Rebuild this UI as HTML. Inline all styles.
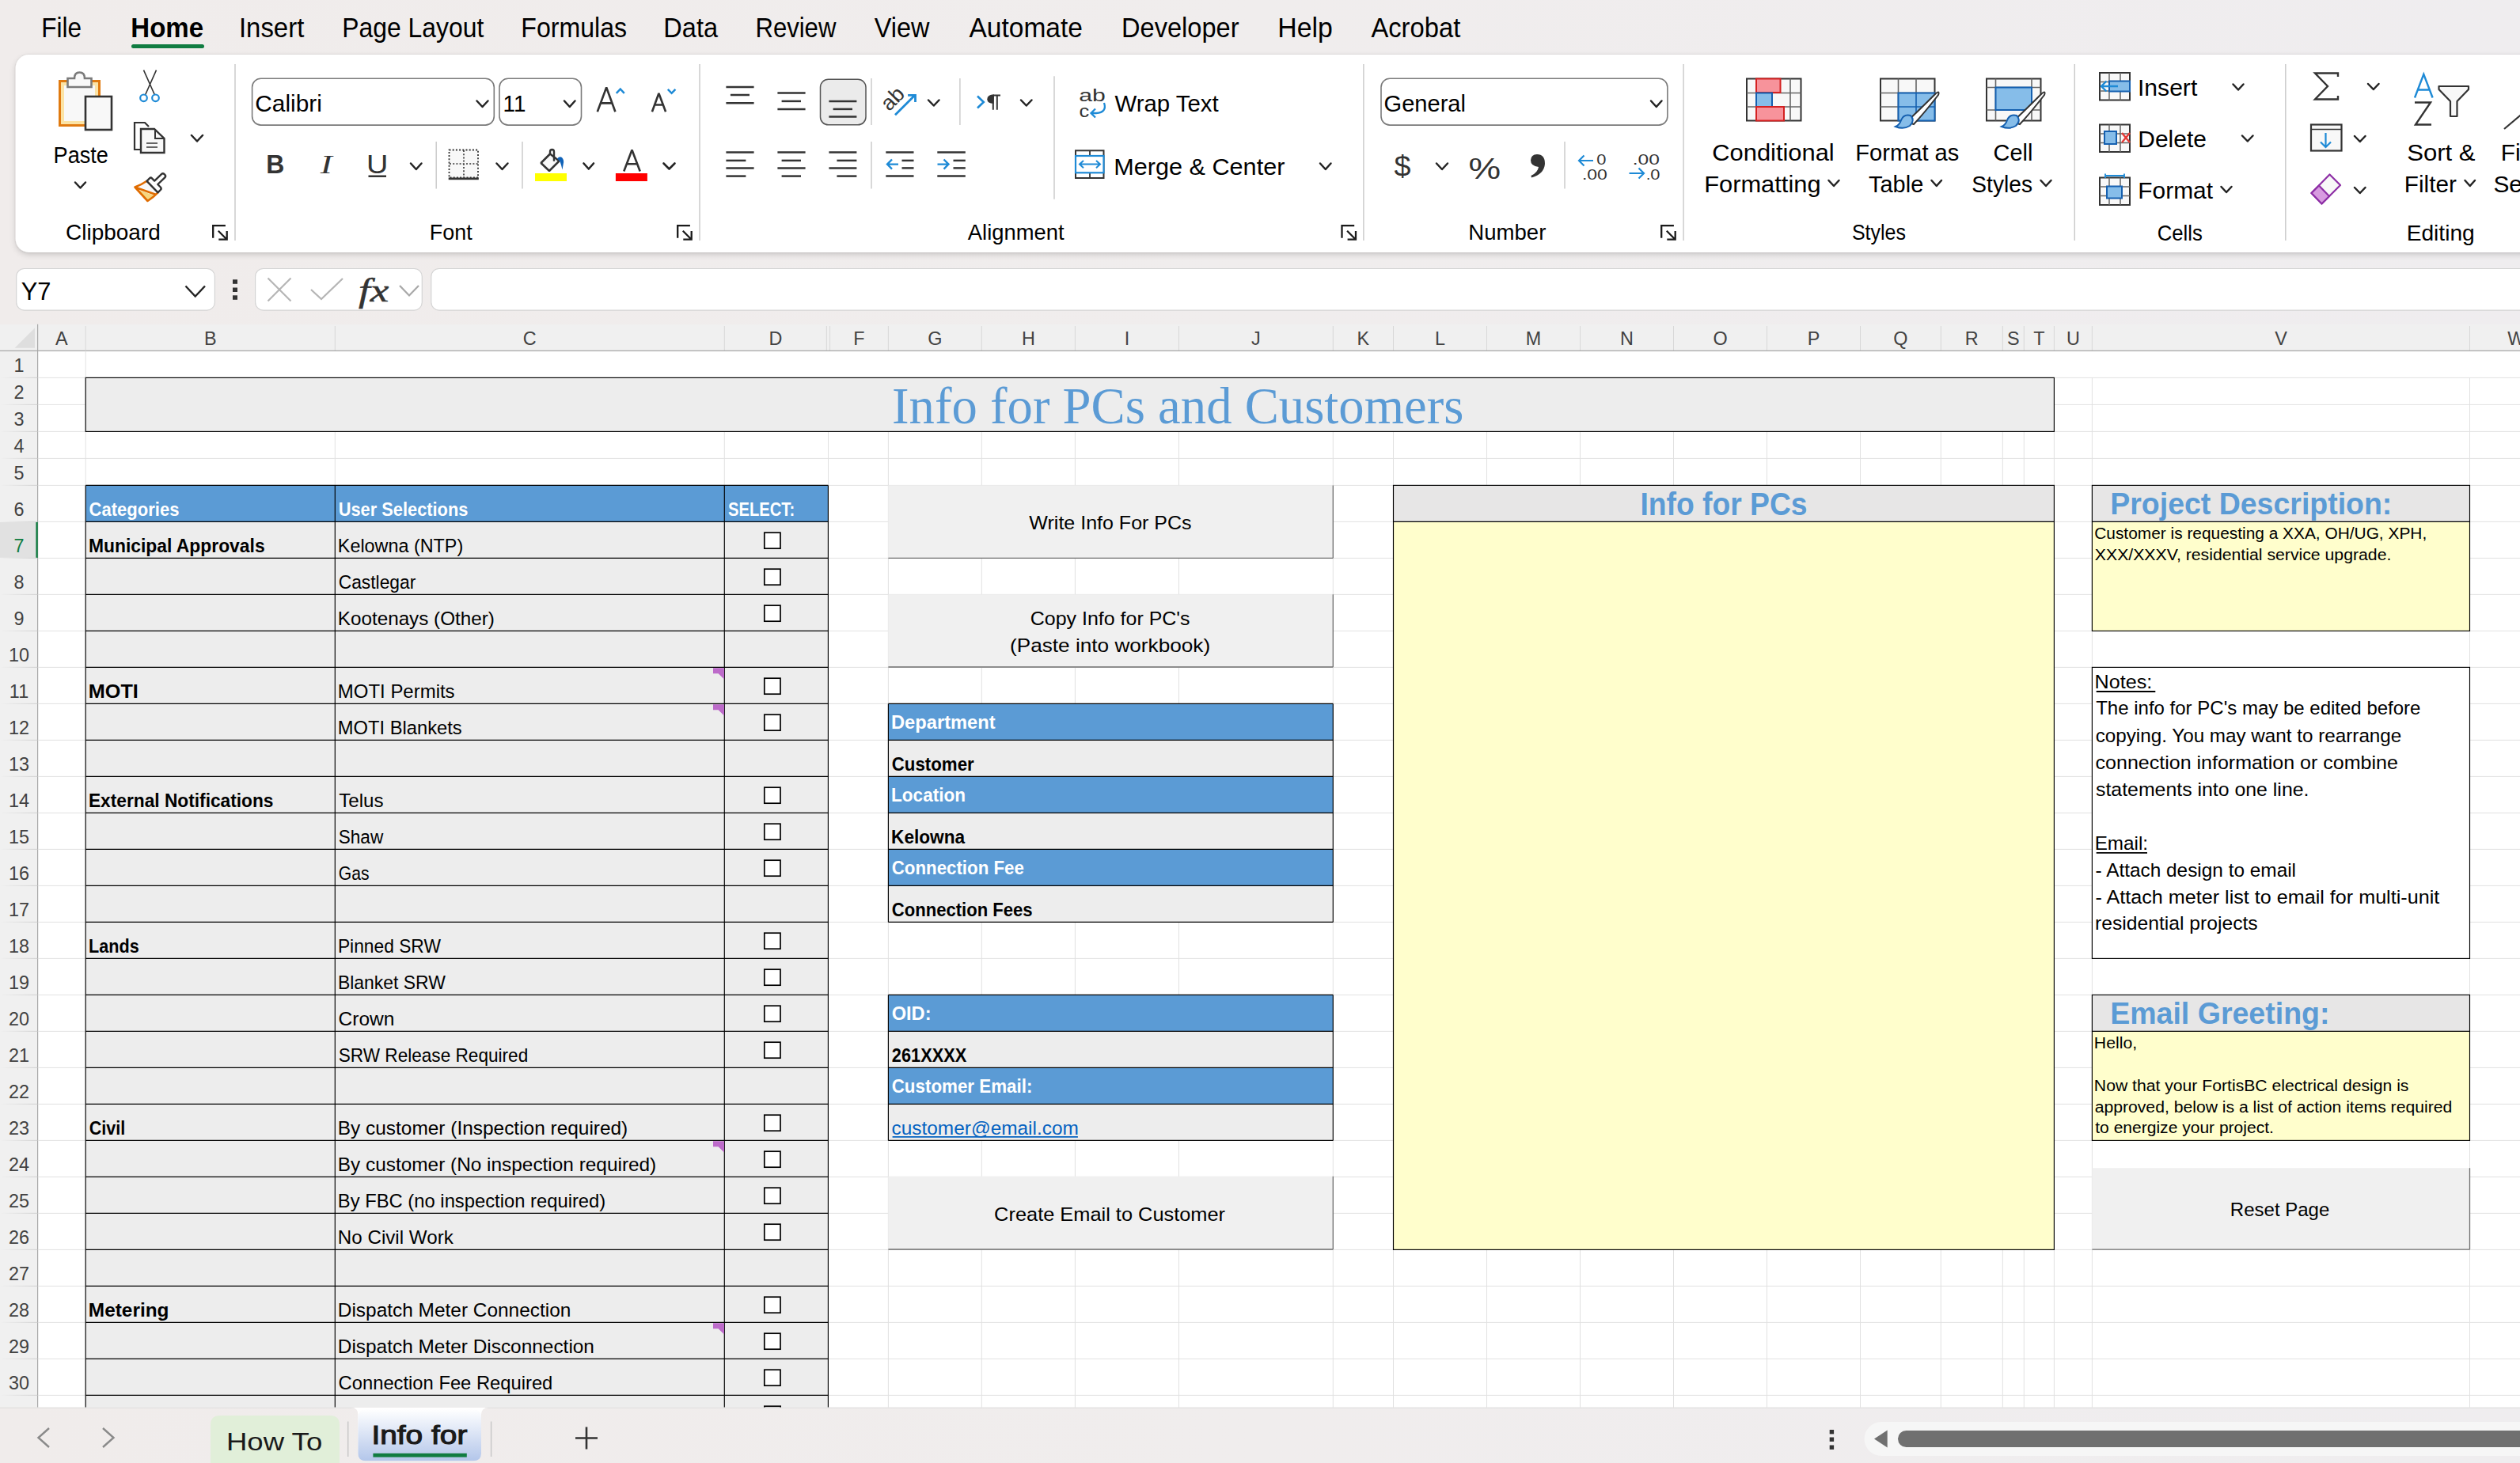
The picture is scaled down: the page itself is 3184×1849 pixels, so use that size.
<!DOCTYPE html><html><head><meta charset="utf-8"><style>html,body{margin:0;padding:0;background:#f0eeec;overflow:hidden}svg{display:block}</style></head><body>
<svg width="3184" height="1849" viewBox="0 0 3184 1849" font-family='"Liberation Sans", sans-serif'>
<defs><linearGradient id="shad" x1="0" y1="0" x2="0" y2="1"><stop offset="0" stop-color="#000" stop-opacity="0.13"/><stop offset="1" stop-color="#000" stop-opacity="0"/></linearGradient><linearGradient id="appbg" x1="0" y1="0" x2="1" y2="0"><stop offset="0" stop-color="#f0eceb"/><stop offset="0.5" stop-color="#f0eded"/><stop offset="1" stop-color="#efedef"/></linearGradient><linearGradient id="tabg" x1="0" y1="0" x2="0" y2="1"><stop offset="0" stop-color="#ffffff"/><stop offset="1" stop-color="#b3c6ea"/></linearGradient><linearGradient id="rowsep" x1="0" y1="0" x2="1" y2="0"><stop offset="0" stop-color="#f0f0f0"/><stop offset="1" stop-color="#d4d4d4"/></linearGradient><filter id="rsh" x="-5%" y="-20%" width="110%" height="150%"><feDropShadow dx="0" dy="0" stdDeviation="1" flood-color="#000" flood-opacity="0.14"/><feDropShadow dx="0" dy="3" stdDeviation="3.5" flood-color="#000" flood-opacity="0.16"/></filter></defs>
<rect x="0.00" y="0.00" width="3184.00" height="1849.00" fill="url(#appbg)" />
<text x="52.20" y="46.50" font-size="34.5" textLength="50.78" lengthAdjust="spacingAndGlyphs" >File</text>
<text x="165.27" y="46.50" font-size="34.5" textLength="91.84" lengthAdjust="spacingAndGlyphs" font-weight="bold" >Home</text>
<text x="301.96" y="46.50" font-size="34.5" textLength="82.33" lengthAdjust="spacingAndGlyphs" >Insert</text>
<text x="432.37" y="46.50" font-size="34.5" textLength="178.90" lengthAdjust="spacingAndGlyphs" >Page Layout</text>
<text x="658.35" y="46.50" font-size="34.5" textLength="133.77" lengthAdjust="spacingAndGlyphs" >Formulas</text>
<text x="838.32" y="46.50" font-size="34.5" textLength="68.68" lengthAdjust="spacingAndGlyphs" >Data</text>
<text x="954.43" y="46.50" font-size="34.5" textLength="101.95" lengthAdjust="spacingAndGlyphs" >Review</text>
<text x="1104.84" y="46.50" font-size="34.5" textLength="69.66" lengthAdjust="spacingAndGlyphs" >View</text>
<text x="1224.52" y="46.50" font-size="34.5" textLength="143.42" lengthAdjust="spacingAndGlyphs" >Automate</text>
<text x="1417.11" y="46.50" font-size="34.5" textLength="148.40" lengthAdjust="spacingAndGlyphs" >Developer</text>
<text x="1614.21" y="46.50" font-size="34.5" textLength="69.60" lengthAdjust="spacingAndGlyphs" >Help</text>
<text x="1732.42" y="46.50" font-size="34.5" textLength="112.87" lengthAdjust="spacingAndGlyphs" >Acrobat</text>
<rect x="166" y="56" width="92" height="5" rx="2.5" fill="#107c41"/>
<rect x="19.7" y="68.9" width="3300" height="250" rx="17" fill="#ffffff" filter="url(#rsh)"/>
<line x1="297.00" y1="81.00" x2="297.00" y2="304.00" stroke="#c8c8c8" stroke-width="1.4" />
<line x1="884.00" y1="81.00" x2="884.00" y2="304.00" stroke="#c8c8c8" stroke-width="1.4" />
<line x1="1722.90" y1="81.00" x2="1722.90" y2="304.00" stroke="#c8c8c8" stroke-width="1.4" />
<line x1="2127.10" y1="81.00" x2="2127.10" y2="304.00" stroke="#c8c8c8" stroke-width="1.4" />
<line x1="2621.30" y1="81.00" x2="2621.30" y2="304.00" stroke="#c8c8c8" stroke-width="1.4" />
<line x1="2887.80" y1="81.00" x2="2887.80" y2="304.00" stroke="#c8c8c8" stroke-width="1.4" />
<text x="83.10" y="303.00" font-size="27.8" textLength="119.66" lengthAdjust="spacingAndGlyphs" >Clipboard</text>
<text x="542.78" y="303.00" font-size="27.8" textLength="53.85" lengthAdjust="spacingAndGlyphs" >Font</text>
<text x="1222.83" y="303.00" font-size="27.8" textLength="121.66" lengthAdjust="spacingAndGlyphs" >Alignment</text>
<text x="1855.33" y="303.00" font-size="27.8" textLength="98.03" lengthAdjust="spacingAndGlyphs" >Number</text>
<text x="2339.88" y="303.30" font-size="27.8" textLength="68.02" lengthAdjust="spacingAndGlyphs" >Styles</text>
<text x="2725.71" y="303.80" font-size="27.8" textLength="57.19" lengthAdjust="spacingAndGlyphs" >Cells</text>
<text x="3040.68" y="303.80" font-size="27.8" textLength="86.09" lengthAdjust="spacingAndGlyphs" >Editing</text>
<path d="M269.2 300.7 L269.2 285.2 L284.9 285.2" fill="none" stroke="#1a1a1a" stroke-width="2.3" />
<path d="M275.8 291.8 L286.2 302.2 M286.7 292.0 L286.7 302.7 L276.3 302.7" fill="none" stroke="#1a1a1a" stroke-width="2.3" />
<path d="M856.2 300.7 L856.2 285.2 L871.9 285.2" fill="none" stroke="#1a1a1a" stroke-width="2.3" />
<path d="M862.8 291.8 L873.2 302.2 M873.7 292.0 L873.7 302.7 L863.3 302.7" fill="none" stroke="#1a1a1a" stroke-width="2.3" />
<path d="M1695.5 300.7 L1695.5 285.2 L1711.2 285.2" fill="none" stroke="#1a1a1a" stroke-width="2.3" />
<path d="M1702.1 291.8 L1712.5 302.2 M1713.0 292.0 L1713.0 302.7 L1702.6 302.7" fill="none" stroke="#1a1a1a" stroke-width="2.3" />
<path d="M2099.2 300.7 L2099.2 285.2 L2114.9 285.2" fill="none" stroke="#1a1a1a" stroke-width="2.3" />
<path d="M2105.8 291.8 L2116.2 302.2 M2116.7 292.0 L2116.7 302.7 L2106.3 302.7" fill="none" stroke="#1a1a1a" stroke-width="2.3" />
<rect x="75.5" y="102.5" width="50" height="56" fill="#fbe3a5" stroke="#e07a10" stroke-width="3"/>
<rect x="81" y="108" width="39" height="45" fill="#f8f8f8"/>
<path d="M85.5 110 L85.5 99 L94 99 Q94 91.5 100.5 91.5 Q107 91.5 107 99 L115.5 99 L115.5 110 Z" fill="#f8f8f8" stroke="#7a7a7a" stroke-width="2.6"/>
<rect x="108" y="122" width="33" height="42" fill="#f8f8f8" stroke="#333" stroke-width="2.6"/>
<text x="67.56" y="205.60" font-size="29.9" textLength="69.35" lengthAdjust="spacingAndGlyphs" >Paste</text>
<path d="M95.0 230.5 L101.5 237.5 L108.0 230.5" fill="none" stroke="#242424" stroke-width="2.5" stroke-linecap="round" stroke-linejoin="round"/>
<path d="M181.5 88.6 L195.5 120 M197.5 88.6 L183.5 120" fill="none" stroke="#333333" stroke-width="1.6" />
<circle cx="181.5" cy="123.8" r="4.3" fill="none" stroke="#1e8ad6" stroke-width="2.2"/>
<circle cx="196.5" cy="123.8" r="4.3" fill="none" stroke="#1e8ad6" stroke-width="2.2"/>
<path d="M187 189 L170 189 L170 155 L183 155 L188 160" fill="none" stroke="#333333" stroke-width="2.2" />
<path d="M178 193 L178 163 L195 163 L207.5 175 L207.5 193 Z" fill="#f8f8f8" stroke="#333333" stroke-width="2.4" />
<path d="M196 163 L196 175 L207.5 175" fill="none" stroke="#333333" stroke-width="2" />
<path d="M185 181 L199 181 M185 186 L199 186" fill="none" stroke="#666" stroke-width="1.8" />
<path d="M242.0 171.0 L249.0 178.5 L256.0 171.0" fill="none" stroke="#242424" stroke-width="2.5" stroke-linecap="round" stroke-linejoin="round"/>
<path d="M185.5 228.8 Q178 234 170.5 236.5 L196 245.5 L199.5 243.3 Z" fill="#f8f8f8"/>
<path d="M175 240 L195 247 L187 253 Z" fill="#f6d67e"/>
<path d="M185.5 228.8 Q178 234 170.5 236.5 L186.5 254 Q194 249 199.5 243.3 M172.5 237.2 L196.5 245.8" fill="none" stroke="#e06c00" stroke-width="2.6" stroke-linejoin="round"/>
<path d="M185.5 228.8 L189 225.3 Q190.5 223.8 192 225.3 L195.2 228.6 L204 220.1 Q205.8 218.4 207.6 220.1 L208.3 220.8 Q210 222.6 208.3 224.3 L199.3 233 L202.8 236.5 Q204.5 238.3 202.8 240 L199.5 243.3 Z" fill="#fff" stroke="#333" stroke-width="2.4" stroke-linejoin="round"/>
<rect x="318.6" y="99.3" width="305.7" height="58.8" rx="11" fill="#fff" stroke="#7a7a7a" stroke-width="1.6"/>
<text x="322.31" y="141.00" font-size="29.9" textLength="84.48" lengthAdjust="spacingAndGlyphs" >Calibri</text>
<path d="M602.5 127.5 L609.5 135.0 L616.5 127.5" fill="none" stroke="#242424" stroke-width="2.5" stroke-linecap="round" stroke-linejoin="round"/>
<rect x="631" y="99.3" width="103.5" height="58.8" rx="11" fill="#fff" stroke="#7a7a7a" stroke-width="1.6"/>
<text x="635.52" y="141.00" font-size="29.9" textLength="28.82" lengthAdjust="spacingAndGlyphs" >11</text>
<path d="M713.0 127.5 L719.8 135.0 L726.5 127.5" fill="none" stroke="#242424" stroke-width="2.5" stroke-linecap="round" stroke-linejoin="round"/>
<path d="M754.8 141.3 L766.2 110.5 L777.4 141.3 M759 130.4 L773.5 130.4" fill="none" stroke="#333" stroke-width="2.6" stroke-linejoin="bevel"/>
<path d="M778.8 117.8 L783.8 112.5 L788.8 117.8" fill="none" stroke="#1e8ad6" stroke-width="2.5" />
<path d="M823.9 141.3 L832.4 118 L841.1 141.3 M827.5 132.5 L837.5 132.5" fill="none" stroke="#333" stroke-width="2.6" stroke-linejoin="bevel"/>
<path d="M843.8 112.8 L848.6 117.8 L853.4 112.8" fill="none" stroke="#1e8ad6" stroke-width="2.5" />
<text x="336.34" y="218.80" font-size="34" textLength="23.09" lengthAdjust="spacingAndGlyphs" font-weight="bold" fill="#333" >B</text>
<text x="404.73" y="218.80" font-size="34" textLength="15.00" lengthAdjust="spacingAndGlyphs" font-style="italic" font-family='"Liberation Serif", serif' fill="#333" >I</text>
<text x="463.06" y="218.80" font-size="34" textLength="27.36" lengthAdjust="spacingAndGlyphs" fill="#333" >U</text>
<rect x="465.50" y="221.50" width="22.50" height="2.50" fill="#333" />
<path d="M519.0 206.5 L525.8 214.0 L532.5 206.5" fill="none" stroke="#242424" stroke-width="2.5" stroke-linecap="round" stroke-linejoin="round"/>
<line x1="551.20" y1="179.00" x2="551.20" y2="238.60" stroke="#c8c8c8" stroke-width="1.4" />
<rect x="567.5" y="189.5" width="36.5" height="35" fill="#f8f8f8" stroke="#333" stroke-width="1.8" stroke-dasharray="2 2.2"/>
<path d="M586 190 L586 224 M568 207 L604 207" fill="none" stroke="#333" stroke-width="1.6" stroke-dasharray="2 2.2"/>
<rect x="566.70" y="224.50" width="38.10" height="2.70" fill="#333" />
<path d="M627.5 206.5 L634.5 214.0 L641.5 206.5" fill="none" stroke="#242424" stroke-width="2.5" stroke-linecap="round" stroke-linejoin="round"/>
<line x1="660.00" y1="179.00" x2="660.00" y2="238.60" stroke="#c8c8c8" stroke-width="1.4" />
<path d="M683.5 206 L695 194.5 L706.5 203.5 L694 216 Z" fill="#f8f8f8" stroke="#333" stroke-width="2.5" stroke-linejoin="bevel"/>
<path d="M695 196 L695 192 Q695 189 697.5 189 Q700 189 700 192 L700 203.8" fill="none" stroke="#333" stroke-width="2.4" />
<path d="M704 200.5 Q707 197 710 199 Q713 202 711.8 207 L710.5 214.5 Q709 208 707.5 204 Z" fill="#0f62b8"/>
<rect x="676.00" y="219.00" width="40.00" height="10.00" fill="#ffff00" />
<path d="M737.5 206.5 L743.8 213.5 L750.0 206.5" fill="none" stroke="#242424" stroke-width="2.6" stroke-linecap="round" stroke-linejoin="round"/>
<path d="M788.3 216.5 L798.5 189.5 L808.7 216.5 M792.2 207.3 L804.8 207.3" fill="none" stroke="#333" stroke-width="2.6" stroke-linejoin="bevel"/>
<rect x="777.90" y="219.00" width="40.00" height="10.00" fill="#ff0000" />
<path d="M838.5 206.5 L845.5 213.5 L852.5 206.5" fill="none" stroke="#242424" stroke-width="2.6" stroke-linecap="round" stroke-linejoin="round"/>
<path d="M917.4 110.0 L952.6 110.0" fill="none" stroke="#333" stroke-width="2.5" />
<path d="M922.9 120.0 L947.0 120.0" fill="none" stroke="#333" stroke-width="2.5" />
<path d="M917.4 130.2 L952.6 130.2" fill="none" stroke="#333" stroke-width="2.5" />
<path d="M982.4 117.6 L1017.6 117.6" fill="none" stroke="#333" stroke-width="2.5" />
<path d="M987.6 127.9 L1012.0 127.9" fill="none" stroke="#333" stroke-width="2.5" />
<path d="M982.4 137.9 L1017.6 137.9" fill="none" stroke="#333" stroke-width="2.5" />
<rect x="1036.5" y="100.3" width="57.5" height="57.5" rx="10" fill="#ebebeb" stroke="#555" stroke-width="1.5"/>
<path d="M1047.4 127.9 L1082.4 127.9" fill="none" stroke="#333" stroke-width="2.5" />
<path d="M1052.6 137.9 L1077.0 137.9" fill="none" stroke="#333" stroke-width="2.5" />
<path d="M1047.4 147.6 L1082.4 147.6" fill="none" stroke="#333" stroke-width="2.5" />
<line x1="1101.00" y1="99.00" x2="1101.00" y2="158.00" stroke="#c8c8c8" stroke-width="1.4" />
<text x="0" y="0" font-size="27" fill="#333" transform="translate(1123.5,141.5) rotate(-45)">ab</text>
<path d="M1131 145.2 L1155.5 120.8 M1147.1 120.3 L1156.5 120.3 L1156.5 128.9" fill="none" stroke="#1e8ad6" stroke-width="2.8" />
<path d="M1173.0 126.5 L1179.8 133.5 L1186.5 126.5" fill="none" stroke="#242424" stroke-width="2.5" stroke-linecap="round" stroke-linejoin="round"/>
<line x1="1212.90" y1="99.00" x2="1212.90" y2="158.00" stroke="#c8c8c8" stroke-width="1.4" />
<path d="M1235 121.5 L1242.8 129 L1235 136.5" fill="none" stroke="#1e8ad6" stroke-width="2.6" />
<path d="M1256 119.5 Q1247.3 119.5 1247.3 125.3 Q1247.3 131 1255.5 131 Z" fill="#333"/>
<path d="M1254.8 120.5 L1254.8 138.7 M1259.8 120.5 L1259.8 138.7 M1254 120.6 L1264 120.6" fill="none" stroke="#333" stroke-width="2" />
<path d="M1290.0 126.5 L1296.8 133.5 L1303.5 126.5" fill="none" stroke="#242424" stroke-width="2.5" stroke-linecap="round" stroke-linejoin="round"/>
<line x1="1332.00" y1="96.20" x2="1332.00" y2="251.70" stroke="#c8c8c8" stroke-width="1.4" />
<path d="M917.4 192.6 L952.6 192.6" fill="none" stroke="#333" stroke-width="2.5" />
<path d="M917.4 202.9 L942.4 202.9" fill="none" stroke="#333" stroke-width="2.5" />
<path d="M917.4 212.4 L952.6 212.4" fill="none" stroke="#333" stroke-width="2.5" />
<path d="M917.4 222.6 L942.4 222.6" fill="none" stroke="#333" stroke-width="2.5" />
<path d="M982.4 192.6 L1017.6 192.6" fill="none" stroke="#333" stroke-width="2.5" />
<path d="M987.6 202.9 L1012.0 202.9" fill="none" stroke="#333" stroke-width="2.5" />
<path d="M982.4 212.4 L1017.6 212.4" fill="none" stroke="#333" stroke-width="2.5" />
<path d="M987.6 222.6 L1012.0 222.6" fill="none" stroke="#333" stroke-width="2.5" />
<path d="M1047.4 192.6 L1082.4 192.6" fill="none" stroke="#333" stroke-width="2.5" />
<path d="M1057.4 202.9 L1082.4 202.9" fill="none" stroke="#333" stroke-width="2.5" />
<path d="M1047.4 212.4 L1082.4 212.4" fill="none" stroke="#333" stroke-width="2.5" />
<path d="M1057.4 222.6 L1082.4 222.6" fill="none" stroke="#333" stroke-width="2.5" />
<line x1="1101.00" y1="179.00" x2="1101.00" y2="238.60" stroke="#c8c8c8" stroke-width="1.4" />
<path d="M1119.3 192.6 L1154.5 192.6" fill="none" stroke="#333" stroke-width="2.5" />
<path d="M1139.5 202.9 L1154.5 202.9" fill="none" stroke="#333" stroke-width="2.5" />
<path d="M1139.5 212.4 L1154.5 212.4" fill="none" stroke="#333" stroke-width="2.5" />
<path d="M1119.3 222.6 L1154.5 222.6" fill="none" stroke="#333" stroke-width="2.5" />
<path d="M1135 207.6 L1121 207.6 M1127 201.5 L1121 207.6 L1127 213.7" fill="none" stroke="#1e8ad6" stroke-width="2.4" />
<path d="M1184.3 192.6 L1219.8 192.6" fill="none" stroke="#333" stroke-width="2.5" />
<path d="M1204.5 202.9 L1219.8 202.9" fill="none" stroke="#333" stroke-width="2.5" />
<path d="M1204.5 212.4 L1219.8 212.4" fill="none" stroke="#333" stroke-width="2.5" />
<path d="M1184.3 222.6 L1219.8 222.6" fill="none" stroke="#333" stroke-width="2.5" />
<path d="M1184.5 207.6 L1198.5 207.6 M1192.5 201.5 L1198.5 207.6 L1192.5 213.7" fill="none" stroke="#1e8ad6" stroke-width="2.4" />
<text x="1363.22" y="128.00" font-size="22" textLength="33.56" lengthAdjust="spacingAndGlyphs" fill="#333" >ab</text>
<text x="1363.42" y="147.50" font-size="22" textLength="12.72" lengthAdjust="spacingAndGlyphs" fill="#333" >c</text>
<path d="M1395 130 Q1399 142 1385 143 L1379 143 M1384 137.5 L1378.5 143 L1384 148.5" fill="none" stroke="#1e8ad6" stroke-width="2.3" />
<text x="1408.45" y="141.00" font-size="29.9" textLength="131.27" lengthAdjust="spacingAndGlyphs" >Wrap Text</text>
<rect x="1359" y="190.3" width="35.5" height="34.7" fill="#fff" stroke="#333" stroke-width="2"/>
<path d="M1377 190.5 L1377 197 M1377 218.5 L1377 225" fill="none" stroke="#333" stroke-width="1.8" />
<rect x="1359" y="197" width="35.5" height="21.3" fill="#fff" stroke="#1e8ad6" stroke-width="2.2"/>
<path d="M1364 207.6 L1390 207.6 M1369 203 L1364 207.6 L1369 212.2 M1385 203 L1390 207.6 L1385 212.2" fill="none" stroke="#1e8ad6" stroke-width="2" />
<text x="1407.27" y="221.00" font-size="29.9" textLength="216.12" lengthAdjust="spacingAndGlyphs" >Merge &amp; Center</text>
<path d="M1668.0 206.5 L1674.8 214.0 L1681.5 206.5" fill="none" stroke="#242424" stroke-width="2.5" stroke-linecap="round" stroke-linejoin="round"/>
<rect x="1745" y="99.3" width="361.9" height="58.8" rx="11" fill="#fff" stroke="#7a7a7a" stroke-width="1.6"/>
<text x="1748.55" y="141.00" font-size="29.9" textLength="103.42" lengthAdjust="spacingAndGlyphs" >General</text>
<path d="M2086.0 127.5 L2092.8 135.0 L2099.5 127.5" fill="none" stroke="#242424" stroke-width="2.5" stroke-linecap="round" stroke-linejoin="round"/>
<text x="1761.62" y="222.50" font-size="36" textLength="20.99" lengthAdjust="spacingAndGlyphs" fill="#333" >$</text>
<path d="M1815.0 206.5 L1822.0 214.0 L1829.0 206.5" fill="none" stroke="#242424" stroke-width="2.5" stroke-linecap="round" stroke-linejoin="round"/>
<text x="1855.40" y="225.50" font-size="37" textLength="40.66" lengthAdjust="spacingAndGlyphs" fill="#333" >%</text>
<path d="M1942 195 Q1952 195 1952 207 Q1951 220 1935 224.5 L1934.5 222 Q1943 218 1944 211 Q1934 210 1934 202.5 Q1934.5 195 1942 195 Z" fill="#333"/>
<line x1="1977.00" y1="179.00" x2="1977.00" y2="238.60" stroke="#c8c8c8" stroke-width="1.4" />
<text x="2017.18" y="207.50" font-size="19" textLength="12.17" lengthAdjust="spacingAndGlyphs" fill="#333" >0</text>
<text x="1998.93" y="227.00" font-size="19" textLength="31.93" lengthAdjust="spacingAndGlyphs" fill="#333" >.00</text>
<path d="M2013 203 L1995 203 M2001.5 196.5 L1995 203 L2001.5 209.5" fill="none" stroke="#1e8ad6" stroke-width="2.2" />
<text x="2062.79" y="207.50" font-size="19" textLength="34.14" lengthAdjust="spacingAndGlyphs" fill="#333" >.00</text>
<text x="2085.18" y="227.00" font-size="19" textLength="12.17" lengthAdjust="spacingAndGlyphs" fill="#333" >0</text>
<text x="2080.00" y="227.00" font-size="19" fill="#333" >.</text>
<path d="M2058.5 219 L2077 219 M2070.5 212.5 L2077 219 L2070.5 225.5" fill="none" stroke="#1e8ad6" stroke-width="2.2" />
<rect x="2207" y="99.5" width="68.5" height="53" fill="#f8f8f8" stroke="#333" stroke-width="2"/>
<path d="M2207 117.5 L2275.5 117.5 M2207 135 L2275.5 135 M2262 99.5 L2262 152.5" fill="none" stroke="#666" stroke-width="1.6" />
<rect x="2219" y="99.5" width="30.5" height="17.5" fill="#f7939b" stroke="#d42121" stroke-width="2"/>
<rect x="2219" y="117.5" width="20" height="17.5" fill="#86bde9" stroke="#1560b0" stroke-width="2"/>
<rect x="2219" y="135" width="35" height="17.5" fill="#f7939b" stroke="#d42121" stroke-width="2"/>
<text x="2163.26" y="202.90" font-size="29.9" textLength="154.49" lengthAdjust="spacingAndGlyphs" >Conditional</text>
<text x="2153.16" y="242.90" font-size="29.9" textLength="147.43" lengthAdjust="spacingAndGlyphs" >Formatting</text>
<path d="M2310.5 228.0 L2317.0 235.0 L2323.5 228.0" fill="none" stroke="#242424" stroke-width="2.5" stroke-linecap="round" stroke-linejoin="round"/>
<rect x="2376" y="99.5" width="68.5" height="53" fill="#f8f8f8" stroke="#333" stroke-width="2"/>
<path d="M2376 117.5 L2444.5 117.5 M2376 135 L2444.5 135 M2398.5 99.5 L2398.5 152.5 M2421 99.5 L2421 152.5" fill="none" stroke="#666" stroke-width="1.6" />
<rect x="2398.5" y="117.5" width="46" height="35" fill="#86bde9" stroke="#1560b0" stroke-width="2"/>
<path d="M2398.5 135 L2444.5 135 M2421 117.5 L2421 152.5" fill="none" stroke="#1560b0" stroke-width="1.6" />
<path d="M2409 154 Q2424 140 2446 118 Q2451 114 2449 120 Q2432 142 2418 157 Z" fill="#fff" stroke="#333" stroke-width="2"/>
<path d="M2395 160 Q2405 164 2413 159 Q2420 152 2414 146 Q2405 144 2402 152 Q2400 158 2395 160 Z" fill="#86bde9" stroke="#1560b0" stroke-width="2"/>
<text x="2344.30" y="202.90" font-size="29.9" textLength="131.05" lengthAdjust="spacingAndGlyphs" >Format as</text>
<text x="2361.05" y="242.90" font-size="29.9" textLength="69.20" lengthAdjust="spacingAndGlyphs" >Table</text>
<path d="M2440.5 228.0 L2446.8 235.0 L2453.0 228.0" fill="none" stroke="#242424" stroke-width="2.5" stroke-linecap="round" stroke-linejoin="round"/>
<rect x="2510" y="99.5" width="68.5" height="53" fill="#f8f8f8" stroke="#333" stroke-width="2"/>
<path d="M2510 110.5 L2578.5 110.5 M2510 139 L2578.5 139 M2521.5 99.5 L2521.5 152.5 M2567 99.5 L2567 152.5" fill="none" stroke="#666" stroke-width="1.6" />
<rect x="2521.5" y="110.5" width="45.5" height="28.5" fill="#86bde9" stroke="#1560b0" stroke-width="2"/>
<path d="M2543 154 Q2558 140 2580 118 Q2585 114 2583 120 Q2566 142 2552 157 Z" fill="#fff" stroke="#333" stroke-width="2"/>
<path d="M2529 160 Q2539 164 2547 159 Q2554 152 2548 146 Q2539 144 2536 152 Q2534 158 2529 160 Z" fill="#86bde9" stroke="#1560b0" stroke-width="2"/>
<text x="2518.55" y="202.90" font-size="29.9" textLength="49.80" lengthAdjust="spacingAndGlyphs" >Cell</text>
<text x="2491.33" y="242.90" font-size="29.9" textLength="76.67" lengthAdjust="spacingAndGlyphs" >Styles</text>
<path d="M2578.5 228.0 L2585.0 235.0 L2591.5 228.0" fill="none" stroke="#242424" stroke-width="2.5" stroke-linecap="round" stroke-linejoin="round"/>
<rect x="2653" y="92.0" width="38" height="34.5" fill="#f8f8f8" stroke="#333" stroke-width="2"/>
<path d="M2665 92.0 L2665 126.5 M2679 92.0 L2679 126.5 M2653 103.5 L2691 103.5 M2653 115.0 L2691 115.0" fill="none" stroke="#666" stroke-width="1.5" />
<rect x="2665" y="102.5" width="26" height="13" fill="#86bde9" stroke="#1560b0" stroke-width="2"/>
<path d="M2676 109 L2655 109 M2661.5 102.5 L2655 109 L2661.5 115.5" fill="none" stroke="#1e8ad6" stroke-width="2.4" />
<text x="2701.02" y="121.40" font-size="29.9" textLength="75.24" lengthAdjust="spacingAndGlyphs" >Insert</text>
<path d="M2821.5 106.5 L2828.0 113.5 L2834.5 106.5" fill="none" stroke="#242424" stroke-width="2.5" stroke-linecap="round" stroke-linejoin="round"/>
<rect x="2653" y="157.5" width="38" height="34.5" fill="#f8f8f8" stroke="#333" stroke-width="2"/>
<path d="M2665 157.5 L2665 192.0 M2679 157.5 L2679 192.0 M2653 169.0 L2691 169.0 M2653 180.5 L2691 180.5" fill="none" stroke="#666" stroke-width="1.5" />
<rect x="2659" y="166" width="15" height="16" fill="#86bde9" stroke="#1560b0" stroke-width="2"/>
<path d="M2681 168 L2691 180 M2691 168 L2681 180" fill="none" stroke="#e53935" stroke-width="2.4" />
<text x="2701.33" y="186.30" font-size="29.9" textLength="86.57" lengthAdjust="spacingAndGlyphs" >Delete</text>
<path d="M2833.0 171.5 L2839.8 178.5 L2846.5 171.5" fill="none" stroke="#242424" stroke-width="2.5" stroke-linecap="round" stroke-linejoin="round"/>
<rect x="2653" y="224.5" width="38" height="34.5" fill="#f8f8f8" stroke="#333" stroke-width="2"/>
<path d="M2665 224.5 L2665 259.0 M2679 224.5 L2679 259.0 M2653 236.0 L2691 236.0 M2653 247.5 L2691 247.5" fill="none" stroke="#666" stroke-width="1.5" />
<rect x="2662" y="235.5" width="19" height="15" fill="#86bde9" stroke="#1560b0" stroke-width="2"/>
<path d="M2660 219.5 L2660 225 M2684 219.5 L2684 225 M2660 222 L2684 222" fill="none" stroke="#1e8ad6" stroke-width="1.8" />
<text x="2701.33" y="251.20" font-size="29.9" textLength="94.68" lengthAdjust="spacingAndGlyphs" >Format</text>
<path d="M2806.5 236.0 L2813.0 243.0 L2819.5 236.0" fill="none" stroke="#242424" stroke-width="2.5" stroke-linecap="round" stroke-linejoin="round"/>
<path d="M2954 97 L2954 92.5 L2925 92.5 L2941 109 L2925 125.5 L2954 125.5 L2954 121" fill="none" stroke="#333" stroke-width="2.4" />
<path d="M2992.0 106.0 L2998.8 113.0 L3005.5 106.0" fill="none" stroke="#242424" stroke-width="2.5" stroke-linecap="round" stroke-linejoin="round"/>
<rect x="2920" y="157.5" width="38.5" height="33" fill="#f8f8f8" stroke="#333" stroke-width="2.2"/>
<path d="M2920 163.5 L2958.5 163.5" fill="none" stroke="#333" stroke-width="1.6" />
<path d="M2938.5 168 L2938.5 186 M2932 179.5 L2938.5 186 L2945 179.5" fill="none" stroke="#1e8ad6" stroke-width="2.2" />
<path d="M2975.0 172.0 L2981.8 179.0 L2988.5 172.0" fill="none" stroke="#242424" stroke-width="2.5" stroke-linecap="round" stroke-linejoin="round"/>
<path d="M2920.5 244 L2943.5 220.5 L2957 234 L2933.5 257.5 Z" fill="#f8f8f8" stroke="#8e2fa6" stroke-width="2.2" stroke-linejoin="round"/>
<path d="M2920.5 244 L2930 234.5 L2943 248 L2933.5 257.5 Z" fill="#d79be0" stroke="#8e2fa6" stroke-width="2.2" stroke-linejoin="round"/>
<path d="M2975.0 237.0 L2981.8 244.0 L2988.5 237.0" fill="none" stroke="#242424" stroke-width="2.5" stroke-linecap="round" stroke-linejoin="round"/>
<path d="M3051 123.5 L3062.3 93.8 L3073.6 123.5 M3055 113.5 L3069.6 113.5" fill="none" stroke="#1e8ad6" stroke-width="2.4" />
<path d="M3051 129.5 L3071 129.5 L3052 157.5 L3072 157.5" fill="none" stroke="#333" stroke-width="2.4" />
<path d="M3081.5 109 L3119 109 L3119 113 L3104.5 128 L3104.5 147 L3096 147 L3096 128 L3081.5 113 Z" fill="#f8f8f8" stroke="#333" stroke-width="2.2" stroke-linejoin="round"/>
<text x="3041.20" y="202.50" font-size="29.9" textLength="86.43" lengthAdjust="spacingAndGlyphs" >Sort &amp;</text>
<text x="3037.85" y="243.10" font-size="29.9" textLength="65.99" lengthAdjust="spacingAndGlyphs" >Filter</text>
<path d="M3114.5 228.0 L3120.8 235.0 L3127.0 228.0" fill="none" stroke="#242424" stroke-width="2.5" stroke-linecap="round" stroke-linejoin="round"/>
<text x="3159.70" y="202.50" font-size="29.9" >Fi</text>
<text x="3150.40" y="243.10" font-size="29.9" >Sel</text>
<path d="M3164 163 L3190 141" fill="none" stroke="#333" stroke-width="2.2" />
<rect x="20.7" y="339.5" width="250.7" height="52.6" rx="10" fill="#fff" stroke="#d4d4d4" stroke-width="1.2"/>
<text x="26.70" y="379.00" font-size="32" textLength="37.78" lengthAdjust="spacingAndGlyphs" >Y7</text>
<path d="M234.5 361.5 L246.7 374.5 L259 361.5" fill="none" stroke="#242424" stroke-width="2.4" />
<rect x="294.00" y="353.30" width="6.00" height="5.50" fill="#333" />
<rect x="294.00" y="363.50" width="6.00" height="5.50" fill="#333" />
<rect x="294.00" y="373.30" width="6.00" height="5.50" fill="#333" />
<rect x="322.6" y="339.5" width="210.7" height="52.6" rx="10" fill="#fff" stroke="#d4d4d4" stroke-width="1.2"/>
<path d="M338.5 351.5 L367.5 380.5 M367.5 351.5 L338.5 380.5" fill="none" stroke="#b5b5b5" stroke-width="2.2" />
<path d="M393 366 L406 378 L433 352" fill="none" stroke="#b5b5b5" stroke-width="2.2" />
<text x="453.07" y="380.50" font-size="42" textLength="38.29" lengthAdjust="spacingAndGlyphs" font-style="italic" font-family='"Liberation Serif", serif' fill="#333" stroke="#333" stroke-width="0.5">fx</text>
<path d="M505 361 L517 373.5 L529 361" fill="none" stroke="#a8a8a8" stroke-width="2.2" />
<rect x="544.8" y="339.5" width="2700" height="52.6" rx="10" fill="#fff" stroke="#d4d4d4" stroke-width="1.2"/>
<rect x="0.00" y="409.80" width="3184.00" height="33.60" fill="#f0f0f0" />
<rect x="0.00" y="443.40" width="47.60" height="1335.40" fill="#f0f0f0" />
<rect x="47.60" y="443.40" width="3136.40" height="1335.40" fill="#ffffff" />
<path d="M18.6 439.8 L44 439.8 L44 414.5 Z" fill="#dedede" />
<line x1="108.20" y1="412.00" x2="108.20" y2="443.40" stroke="#d8d8d8" stroke-width="1" />
<text x="77.90" y="435.80" font-size="23.4" fill="#424242" text-anchor="middle" >A</text>
<line x1="423.30" y1="412.00" x2="423.30" y2="443.40" stroke="#d8d8d8" stroke-width="1" />
<text x="265.75" y="435.80" font-size="23.4" fill="#424242" text-anchor="middle" >B</text>
<line x1="915.30" y1="412.00" x2="915.30" y2="443.40" stroke="#d8d8d8" stroke-width="1" />
<text x="669.30" y="435.80" font-size="23.4" fill="#424242" text-anchor="middle" >C</text>
<line x1="1044.40" y1="412.00" x2="1044.40" y2="443.40" stroke="#d8d8d8" stroke-width="1" />
<text x="979.85" y="435.80" font-size="23.4" fill="#424242" text-anchor="middle" >D</text>
<line x1="1122.40" y1="412.00" x2="1122.40" y2="443.40" stroke="#d8d8d8" stroke-width="1" />
<text x="1085.50" y="435.80" font-size="23.4" fill="#424242" text-anchor="middle" >F</text>
<line x1="1240.30" y1="412.00" x2="1240.30" y2="443.40" stroke="#d8d8d8" stroke-width="1" />
<text x="1181.35" y="435.80" font-size="23.4" fill="#424242" text-anchor="middle" >G</text>
<line x1="1358.40" y1="412.00" x2="1358.40" y2="443.40" stroke="#d8d8d8" stroke-width="1" />
<text x="1299.35" y="435.80" font-size="23.4" fill="#424242" text-anchor="middle" >H</text>
<line x1="1489.50" y1="412.00" x2="1489.50" y2="443.40" stroke="#d8d8d8" stroke-width="1" />
<text x="1423.95" y="435.80" font-size="23.4" fill="#424242" text-anchor="middle" >I</text>
<line x1="1684.30" y1="412.00" x2="1684.30" y2="443.40" stroke="#d8d8d8" stroke-width="1" />
<text x="1586.90" y="435.80" font-size="23.4" fill="#424242" text-anchor="middle" >J</text>
<line x1="1760.50" y1="412.00" x2="1760.50" y2="443.40" stroke="#d8d8d8" stroke-width="1" />
<text x="1722.40" y="435.80" font-size="23.4" fill="#424242" text-anchor="middle" >K</text>
<line x1="1878.50" y1="412.00" x2="1878.50" y2="443.40" stroke="#d8d8d8" stroke-width="1" />
<text x="1819.50" y="435.80" font-size="23.4" fill="#424242" text-anchor="middle" >L</text>
<line x1="1996.50" y1="412.00" x2="1996.50" y2="443.40" stroke="#d8d8d8" stroke-width="1" />
<text x="1937.50" y="435.80" font-size="23.4" fill="#424242" text-anchor="middle" >M</text>
<line x1="2114.50" y1="412.00" x2="2114.50" y2="443.40" stroke="#d8d8d8" stroke-width="1" />
<text x="2055.50" y="435.80" font-size="23.4" fill="#424242" text-anchor="middle" >N</text>
<line x1="2232.50" y1="412.00" x2="2232.50" y2="443.40" stroke="#d8d8d8" stroke-width="1" />
<text x="2173.50" y="435.80" font-size="23.4" fill="#424242" text-anchor="middle" >O</text>
<line x1="2350.50" y1="412.00" x2="2350.50" y2="443.40" stroke="#d8d8d8" stroke-width="1" />
<text x="2291.50" y="435.80" font-size="23.4" fill="#424242" text-anchor="middle" >P</text>
<line x1="2452.30" y1="412.00" x2="2452.30" y2="443.40" stroke="#d8d8d8" stroke-width="1" />
<text x="2401.40" y="435.80" font-size="23.4" fill="#424242" text-anchor="middle" >Q</text>
<line x1="2530.30" y1="412.00" x2="2530.30" y2="443.40" stroke="#d8d8d8" stroke-width="1" />
<text x="2491.30" y="435.80" font-size="23.4" fill="#424242" text-anchor="middle" >R</text>
<line x1="2557.30" y1="412.00" x2="2557.30" y2="443.40" stroke="#d8d8d8" stroke-width="1" />
<text x="2543.80" y="435.80" font-size="23.4" fill="#424242" text-anchor="middle" >S</text>
<line x1="2595.40" y1="412.00" x2="2595.40" y2="443.40" stroke="#d8d8d8" stroke-width="1" />
<text x="2576.35" y="435.80" font-size="23.4" fill="#424242" text-anchor="middle" >T</text>
<line x1="2643.40" y1="412.00" x2="2643.40" y2="443.40" stroke="#d8d8d8" stroke-width="1" />
<text x="2619.40" y="435.80" font-size="23.4" fill="#424242" text-anchor="middle" >U</text>
<line x1="3120.50" y1="412.00" x2="3120.50" y2="443.40" stroke="#d8d8d8" stroke-width="1" />
<text x="2881.95" y="435.80" font-size="23.4" fill="#424242" text-anchor="middle" >V</text>
<line x1="3300.00" y1="412.00" x2="3300.00" y2="443.40" stroke="#d8d8d8" stroke-width="1" />
<text x="3168.20" y="435.80" font-size="23.4" fill="#424242" >W</text>
<line x1="1048.60" y1="412.00" x2="1048.60" y2="443.40" stroke="#d8d8d8" stroke-width="1" />
<line x1="0.00" y1="443.40" x2="3184.00" y2="443.40" stroke="#a8a8a8" stroke-width="1.3" />
<line x1="47.60" y1="409.80" x2="47.60" y2="1778.80" stroke="#a8a8a8" stroke-width="1.2" />
<rect x="0.00" y="659.40" width="47.20" height="46.00" fill="#e1e1e1" />
<line x1="46.60" y1="659.40" x2="46.60" y2="705.40" stroke="#107c41" stroke-width="2.4" />
<rect x="0" y="476.80" width="47" height="1.2" fill="url(#rowsep)"/>
<text x="24.00" y="469.90" font-size="23.4" fill="#424242" text-anchor="middle" >1</text>
<rect x="0" y="510.80" width="47" height="1.2" fill="url(#rowsep)"/>
<text x="24.00" y="503.90" font-size="23.4" fill="#424242" text-anchor="middle" >2</text>
<rect x="0" y="544.80" width="47" height="1.2" fill="url(#rowsep)"/>
<text x="24.00" y="537.90" font-size="23.4" fill="#424242" text-anchor="middle" >3</text>
<rect x="0" y="578.80" width="47" height="1.2" fill="url(#rowsep)"/>
<text x="24.00" y="571.90" font-size="23.4" fill="#424242" text-anchor="middle" >4</text>
<rect x="0" y="612.80" width="47" height="1.2" fill="url(#rowsep)"/>
<text x="24.00" y="605.90" font-size="23.4" fill="#424242" text-anchor="middle" >5</text>
<rect x="0" y="658.80" width="47" height="1.2" fill="url(#rowsep)"/>
<text x="24.00" y="651.90" font-size="23.4" fill="#424242" text-anchor="middle" >6</text>
<rect x="0" y="704.80" width="47" height="1.2" fill="url(#rowsep)"/>
<text x="24.00" y="697.90" font-size="23.4" fill="#107c41" text-anchor="middle" >7</text>
<rect x="0" y="750.80" width="47" height="1.2" fill="url(#rowsep)"/>
<text x="24.00" y="743.90" font-size="23.4" fill="#424242" text-anchor="middle" >8</text>
<rect x="0" y="796.80" width="47" height="1.2" fill="url(#rowsep)"/>
<text x="24.00" y="789.90" font-size="23.4" fill="#424242" text-anchor="middle" >9</text>
<rect x="0" y="842.80" width="47" height="1.2" fill="url(#rowsep)"/>
<text x="24.00" y="835.90" font-size="23.4" fill="#424242" text-anchor="middle" >10</text>
<rect x="0" y="888.80" width="47" height="1.2" fill="url(#rowsep)"/>
<text x="24.00" y="881.90" font-size="23.4" fill="#424242" text-anchor="middle" >11</text>
<rect x="0" y="934.80" width="47" height="1.2" fill="url(#rowsep)"/>
<text x="24.00" y="927.90" font-size="23.4" fill="#424242" text-anchor="middle" >12</text>
<rect x="0" y="980.80" width="47" height="1.2" fill="url(#rowsep)"/>
<text x="24.00" y="973.90" font-size="23.4" fill="#424242" text-anchor="middle" >13</text>
<rect x="0" y="1026.80" width="47" height="1.2" fill="url(#rowsep)"/>
<text x="24.00" y="1019.90" font-size="23.4" fill="#424242" text-anchor="middle" >14</text>
<rect x="0" y="1072.80" width="47" height="1.2" fill="url(#rowsep)"/>
<text x="24.00" y="1065.90" font-size="23.4" fill="#424242" text-anchor="middle" >15</text>
<rect x="0" y="1118.80" width="47" height="1.2" fill="url(#rowsep)"/>
<text x="24.00" y="1111.90" font-size="23.4" fill="#424242" text-anchor="middle" >16</text>
<rect x="0" y="1164.80" width="47" height="1.2" fill="url(#rowsep)"/>
<text x="24.00" y="1157.90" font-size="23.4" fill="#424242" text-anchor="middle" >17</text>
<rect x="0" y="1210.80" width="47" height="1.2" fill="url(#rowsep)"/>
<text x="24.00" y="1203.90" font-size="23.4" fill="#424242" text-anchor="middle" >18</text>
<rect x="0" y="1256.80" width="47" height="1.2" fill="url(#rowsep)"/>
<text x="24.00" y="1249.90" font-size="23.4" fill="#424242" text-anchor="middle" >19</text>
<rect x="0" y="1302.80" width="47" height="1.2" fill="url(#rowsep)"/>
<text x="24.00" y="1295.90" font-size="23.4" fill="#424242" text-anchor="middle" >20</text>
<rect x="0" y="1348.80" width="47" height="1.2" fill="url(#rowsep)"/>
<text x="24.00" y="1341.90" font-size="23.4" fill="#424242" text-anchor="middle" >21</text>
<rect x="0" y="1394.80" width="47" height="1.2" fill="url(#rowsep)"/>
<text x="24.00" y="1387.90" font-size="23.4" fill="#424242" text-anchor="middle" >22</text>
<rect x="0" y="1440.80" width="47" height="1.2" fill="url(#rowsep)"/>
<text x="24.00" y="1433.90" font-size="23.4" fill="#424242" text-anchor="middle" >23</text>
<rect x="0" y="1486.80" width="47" height="1.2" fill="url(#rowsep)"/>
<text x="24.00" y="1479.90" font-size="23.4" fill="#424242" text-anchor="middle" >24</text>
<rect x="0" y="1532.80" width="47" height="1.2" fill="url(#rowsep)"/>
<text x="24.00" y="1525.90" font-size="23.4" fill="#424242" text-anchor="middle" >25</text>
<rect x="0" y="1578.80" width="47" height="1.2" fill="url(#rowsep)"/>
<text x="24.00" y="1571.90" font-size="23.4" fill="#424242" text-anchor="middle" >26</text>
<rect x="0" y="1624.80" width="47" height="1.2" fill="url(#rowsep)"/>
<text x="24.00" y="1617.90" font-size="23.4" fill="#424242" text-anchor="middle" >27</text>
<rect x="0" y="1670.80" width="47" height="1.2" fill="url(#rowsep)"/>
<text x="24.00" y="1663.90" font-size="23.4" fill="#424242" text-anchor="middle" >28</text>
<rect x="0" y="1716.80" width="47" height="1.2" fill="url(#rowsep)"/>
<text x="24.00" y="1709.90" font-size="23.4" fill="#424242" text-anchor="middle" >29</text>
<rect x="0" y="1762.80" width="47" height="1.2" fill="url(#rowsep)"/>
<text x="24.00" y="1755.90" font-size="23.4" fill="#424242" text-anchor="middle" >30</text>
<line x1="108.20" y1="443.40" x2="108.20" y2="1778.80" stroke="#e1e1e1" stroke-width="1" />
<line x1="423.30" y1="477.40" x2="423.30" y2="1778.80" stroke="#e1e1e1" stroke-width="1" />
<line x1="915.30" y1="477.40" x2="915.30" y2="1778.80" stroke="#e1e1e1" stroke-width="1" />
<line x1="1046.50" y1="477.40" x2="1046.50" y2="1778.80" stroke="#e1e1e1" stroke-width="1" />
<line x1="1122.40" y1="477.40" x2="1122.40" y2="1778.80" stroke="#e1e1e1" stroke-width="1" />
<line x1="1240.30" y1="477.40" x2="1240.30" y2="1778.80" stroke="#e1e1e1" stroke-width="1" />
<line x1="1358.40" y1="477.40" x2="1358.40" y2="1778.80" stroke="#e1e1e1" stroke-width="1" />
<line x1="1489.50" y1="477.40" x2="1489.50" y2="1778.80" stroke="#e1e1e1" stroke-width="1" />
<line x1="1684.30" y1="477.40" x2="1684.30" y2="1778.80" stroke="#e1e1e1" stroke-width="1" />
<line x1="1760.50" y1="477.40" x2="1760.50" y2="1778.80" stroke="#e1e1e1" stroke-width="1" />
<line x1="1878.50" y1="477.40" x2="1878.50" y2="1778.80" stroke="#e1e1e1" stroke-width="1" />
<line x1="1996.50" y1="477.40" x2="1996.50" y2="1778.80" stroke="#e1e1e1" stroke-width="1" />
<line x1="2114.50" y1="477.40" x2="2114.50" y2="1778.80" stroke="#e1e1e1" stroke-width="1" />
<line x1="2232.50" y1="477.40" x2="2232.50" y2="1778.80" stroke="#e1e1e1" stroke-width="1" />
<line x1="2350.50" y1="477.40" x2="2350.50" y2="1778.80" stroke="#e1e1e1" stroke-width="1" />
<line x1="2452.30" y1="477.40" x2="2452.30" y2="1778.80" stroke="#e1e1e1" stroke-width="1" />
<line x1="2530.30" y1="477.40" x2="2530.30" y2="1778.80" stroke="#e1e1e1" stroke-width="1" />
<line x1="2557.30" y1="477.40" x2="2557.30" y2="1778.80" stroke="#e1e1e1" stroke-width="1" />
<line x1="2595.40" y1="477.40" x2="2595.40" y2="1778.80" stroke="#e1e1e1" stroke-width="1" />
<line x1="2643.40" y1="477.40" x2="2643.40" y2="1778.80" stroke="#e1e1e1" stroke-width="1" />
<line x1="3120.50" y1="477.40" x2="3120.50" y2="1778.80" stroke="#e1e1e1" stroke-width="1" />
<line x1="47.60" y1="477.40" x2="3184.00" y2="477.40" stroke="#e1e1e1" stroke-width="1" />
<line x1="47.60" y1="511.40" x2="3184.00" y2="511.40" stroke="#e1e1e1" stroke-width="1" />
<line x1="47.60" y1="545.40" x2="3184.00" y2="545.40" stroke="#e1e1e1" stroke-width="1" />
<line x1="47.60" y1="579.40" x2="3184.00" y2="579.40" stroke="#e1e1e1" stroke-width="1" />
<line x1="47.60" y1="613.40" x2="3184.00" y2="613.40" stroke="#e1e1e1" stroke-width="1" />
<line x1="47.60" y1="659.40" x2="3184.00" y2="659.40" stroke="#e1e1e1" stroke-width="1" />
<line x1="47.60" y1="705.40" x2="3184.00" y2="705.40" stroke="#e1e1e1" stroke-width="1" />
<line x1="47.60" y1="751.40" x2="3184.00" y2="751.40" stroke="#e1e1e1" stroke-width="1" />
<line x1="47.60" y1="797.40" x2="3184.00" y2="797.40" stroke="#e1e1e1" stroke-width="1" />
<line x1="47.60" y1="843.40" x2="3184.00" y2="843.40" stroke="#e1e1e1" stroke-width="1" />
<line x1="47.60" y1="889.40" x2="3184.00" y2="889.40" stroke="#e1e1e1" stroke-width="1" />
<line x1="47.60" y1="935.40" x2="3184.00" y2="935.40" stroke="#e1e1e1" stroke-width="1" />
<line x1="47.60" y1="981.40" x2="3184.00" y2="981.40" stroke="#e1e1e1" stroke-width="1" />
<line x1="47.60" y1="1027.40" x2="3184.00" y2="1027.40" stroke="#e1e1e1" stroke-width="1" />
<line x1="47.60" y1="1073.40" x2="3184.00" y2="1073.40" stroke="#e1e1e1" stroke-width="1" />
<line x1="47.60" y1="1119.40" x2="3184.00" y2="1119.40" stroke="#e1e1e1" stroke-width="1" />
<line x1="47.60" y1="1165.40" x2="3184.00" y2="1165.40" stroke="#e1e1e1" stroke-width="1" />
<line x1="47.60" y1="1211.40" x2="3184.00" y2="1211.40" stroke="#e1e1e1" stroke-width="1" />
<line x1="47.60" y1="1257.40" x2="3184.00" y2="1257.40" stroke="#e1e1e1" stroke-width="1" />
<line x1="47.60" y1="1303.40" x2="3184.00" y2="1303.40" stroke="#e1e1e1" stroke-width="1" />
<line x1="47.60" y1="1349.40" x2="3184.00" y2="1349.40" stroke="#e1e1e1" stroke-width="1" />
<line x1="47.60" y1="1395.40" x2="3184.00" y2="1395.40" stroke="#e1e1e1" stroke-width="1" />
<line x1="47.60" y1="1441.40" x2="3184.00" y2="1441.40" stroke="#e1e1e1" stroke-width="1" />
<line x1="47.60" y1="1487.40" x2="3184.00" y2="1487.40" stroke="#e1e1e1" stroke-width="1" />
<line x1="47.60" y1="1533.40" x2="3184.00" y2="1533.40" stroke="#e1e1e1" stroke-width="1" />
<line x1="47.60" y1="1579.40" x2="3184.00" y2="1579.40" stroke="#e1e1e1" stroke-width="1" />
<line x1="47.60" y1="1625.40" x2="3184.00" y2="1625.40" stroke="#e1e1e1" stroke-width="1" />
<line x1="47.60" y1="1671.40" x2="3184.00" y2="1671.40" stroke="#e1e1e1" stroke-width="1" />
<line x1="47.60" y1="1717.40" x2="3184.00" y2="1717.40" stroke="#e1e1e1" stroke-width="1" />
<line x1="47.60" y1="1763.40" x2="3184.00" y2="1763.40" stroke="#e1e1e1" stroke-width="1" />
<rect x="108.20" y="477.40" width="2487.20" height="68.00" fill="#ededed" />
<rect x="108.20" y="477.40" width="2487.20" height="68.00" fill="none" stroke="#000" stroke-width="1.15"/>
<text x="1127.04" y="535.20" font-size="64.8" textLength="722.40" lengthAdjust="spacingAndGlyphs" font-family='"Liberation Serif", serif' fill="#5b9bd5" >Info for PCs and Customers</text>
<rect x="108.20" y="613.40" width="938.20" height="46.00" fill="#5b9bd5" />
<rect x="108.20" y="659.40" width="938.20" height="1119.40" fill="#ededed" />
<line x1="108.20" y1="613.40" x2="1046.40" y2="613.40" stroke="#000" stroke-width="1.15" />
<line x1="108.20" y1="659.40" x2="1046.40" y2="659.40" stroke="#000" stroke-width="1.15" />
<line x1="108.20" y1="705.40" x2="1046.40" y2="705.40" stroke="#000" stroke-width="1.15" />
<line x1="108.20" y1="751.40" x2="1046.40" y2="751.40" stroke="#000" stroke-width="1.15" />
<line x1="108.20" y1="797.40" x2="1046.40" y2="797.40" stroke="#000" stroke-width="1.15" />
<line x1="108.20" y1="843.40" x2="1046.40" y2="843.40" stroke="#000" stroke-width="1.15" />
<line x1="108.20" y1="889.40" x2="1046.40" y2="889.40" stroke="#000" stroke-width="1.15" />
<line x1="108.20" y1="935.40" x2="1046.40" y2="935.40" stroke="#000" stroke-width="1.15" />
<line x1="108.20" y1="981.40" x2="1046.40" y2="981.40" stroke="#000" stroke-width="1.15" />
<line x1="108.20" y1="1027.40" x2="1046.40" y2="1027.40" stroke="#000" stroke-width="1.15" />
<line x1="108.20" y1="1073.40" x2="1046.40" y2="1073.40" stroke="#000" stroke-width="1.15" />
<line x1="108.20" y1="1119.40" x2="1046.40" y2="1119.40" stroke="#000" stroke-width="1.15" />
<line x1="108.20" y1="1165.40" x2="1046.40" y2="1165.40" stroke="#000" stroke-width="1.15" />
<line x1="108.20" y1="1211.40" x2="1046.40" y2="1211.40" stroke="#000" stroke-width="1.15" />
<line x1="108.20" y1="1257.40" x2="1046.40" y2="1257.40" stroke="#000" stroke-width="1.15" />
<line x1="108.20" y1="1303.40" x2="1046.40" y2="1303.40" stroke="#000" stroke-width="1.15" />
<line x1="108.20" y1="1349.40" x2="1046.40" y2="1349.40" stroke="#000" stroke-width="1.15" />
<line x1="108.20" y1="1395.40" x2="1046.40" y2="1395.40" stroke="#000" stroke-width="1.15" />
<line x1="108.20" y1="1441.40" x2="1046.40" y2="1441.40" stroke="#000" stroke-width="1.15" />
<line x1="108.20" y1="1487.40" x2="1046.40" y2="1487.40" stroke="#000" stroke-width="1.15" />
<line x1="108.20" y1="1533.40" x2="1046.40" y2="1533.40" stroke="#000" stroke-width="1.15" />
<line x1="108.20" y1="1579.40" x2="1046.40" y2="1579.40" stroke="#000" stroke-width="1.15" />
<line x1="108.20" y1="1625.40" x2="1046.40" y2="1625.40" stroke="#000" stroke-width="1.15" />
<line x1="108.20" y1="1671.40" x2="1046.40" y2="1671.40" stroke="#000" stroke-width="1.15" />
<line x1="108.20" y1="1717.40" x2="1046.40" y2="1717.40" stroke="#000" stroke-width="1.15" />
<line x1="108.20" y1="1763.40" x2="1046.40" y2="1763.40" stroke="#000" stroke-width="1.15" />
<line x1="108.20" y1="613.40" x2="108.20" y2="1778.80" stroke="#000" stroke-width="1.15" />
<line x1="423.30" y1="613.40" x2="423.30" y2="1778.80" stroke="#000" stroke-width="1.15" />
<line x1="915.30" y1="613.40" x2="915.30" y2="1778.80" stroke="#000" stroke-width="1.15" />
<line x1="1046.40" y1="613.40" x2="1046.40" y2="1778.80" stroke="#000" stroke-width="1.15" />
<text x="112.62" y="652.00" font-size="23.7" textLength="113.79" lengthAdjust="spacingAndGlyphs" font-weight="bold" fill="#fff" >Categories</text>
<text x="427.69" y="652.00" font-size="23.7" textLength="163.71" lengthAdjust="spacingAndGlyphs" font-weight="bold" fill="#fff" >User Selections</text>
<text x="920.05" y="652.00" font-size="23.7" textLength="84.06" lengthAdjust="spacingAndGlyphs" font-weight="bold" fill="#fff" >SELECT:</text>
<text x="111.96" y="697.80" font-size="23.7" textLength="222.66" lengthAdjust="spacingAndGlyphs" font-weight="bold" fill="#000" >Municipal Approvals</text>
<text x="111.80" y="881.80" font-size="23.7" textLength="63.03" lengthAdjust="spacingAndGlyphs" font-weight="bold" fill="#000" >MOTI</text>
<text x="111.97" y="1019.80" font-size="23.7" textLength="233.54" lengthAdjust="spacingAndGlyphs" font-weight="bold" fill="#000" >External Notifications</text>
<text x="112.04" y="1203.80" font-size="23.7" textLength="63.62" lengthAdjust="spacingAndGlyphs" font-weight="bold" fill="#000" >Lands</text>
<text x="112.64" y="1433.80" font-size="23.7" textLength="45.56" lengthAdjust="spacingAndGlyphs" font-weight="bold" fill="#000" >Civil</text>
<text x="111.85" y="1663.80" font-size="23.7" textLength="101.62" lengthAdjust="spacingAndGlyphs" font-weight="bold" fill="#000" >Metering</text>
<text x="426.87" y="697.80" font-size="23.7" textLength="158.33" lengthAdjust="spacingAndGlyphs" fill="#000" >Kelowna (NTP)</text>
<text x="427.66" y="743.80" font-size="23.7" textLength="97.68" lengthAdjust="spacingAndGlyphs" fill="#000" >Castlegar</text>
<text x="426.80" y="789.80" font-size="23.7" textLength="198.07" lengthAdjust="spacingAndGlyphs" fill="#000" >Kootenays (Other)</text>
<text x="426.82" y="881.80" font-size="23.7" textLength="147.80" lengthAdjust="spacingAndGlyphs" fill="#000" >MOTI Permits</text>
<text x="426.84" y="927.80" font-size="23.7" textLength="156.80" lengthAdjust="spacingAndGlyphs" fill="#000" >MOTI Blankets</text>
<text x="428.26" y="1019.80" font-size="23.7" textLength="56.38" lengthAdjust="spacingAndGlyphs" fill="#000" >Telus</text>
<text x="427.78" y="1065.80" font-size="23.7" textLength="56.44" lengthAdjust="spacingAndGlyphs" fill="#000" >Shaw</text>
<text x="427.74" y="1111.80" font-size="23.7" textLength="38.78" lengthAdjust="spacingAndGlyphs" fill="#000" >Gas</text>
<text x="426.92" y="1203.80" font-size="23.7" textLength="129.98" lengthAdjust="spacingAndGlyphs" fill="#000" >Pinned SRW</text>
<text x="426.91" y="1249.80" font-size="23.7" textLength="135.97" lengthAdjust="spacingAndGlyphs" fill="#000" >Blanket SRW</text>
<text x="427.57" y="1295.80" font-size="23.7" textLength="70.81" lengthAdjust="spacingAndGlyphs" fill="#000" >Crown</text>
<text x="427.78" y="1341.80" font-size="23.7" textLength="239.44" lengthAdjust="spacingAndGlyphs" fill="#000" >SRW Release Required</text>
<text x="426.79" y="1433.80" font-size="23.7" textLength="366.46" lengthAdjust="spacingAndGlyphs" fill="#000" >By customer (Inspection required)</text>
<text x="426.79" y="1479.80" font-size="23.7" textLength="402.47" lengthAdjust="spacingAndGlyphs" fill="#000" >By customer (No inspection required)</text>
<text x="426.84" y="1525.80" font-size="23.7" textLength="338.42" lengthAdjust="spacingAndGlyphs" fill="#000" >By FBC (no inspection required)</text>
<text x="426.81" y="1571.80" font-size="23.7" textLength="146.00" lengthAdjust="spacingAndGlyphs" fill="#000" >No Civil Work</text>
<text x="426.79" y="1663.80" font-size="23.7" textLength="294.59" lengthAdjust="spacingAndGlyphs" fill="#000" >Dispatch Meter Connection</text>
<text x="426.79" y="1709.80" font-size="23.7" textLength="324.18" lengthAdjust="spacingAndGlyphs" fill="#000" >Dispatch Meter Disconnection</text>
<text x="427.61" y="1755.80" font-size="23.7" textLength="270.71" lengthAdjust="spacingAndGlyphs" fill="#000" >Connection Fee Required</text>
<rect x="965.80" y="673.20" width="20.2" height="20.00" fill="#fff" stroke="#000" stroke-width="1.7"/>
<rect x="965.80" y="719.20" width="20.2" height="20.00" fill="#fff" stroke="#000" stroke-width="1.7"/>
<rect x="965.80" y="765.20" width="20.2" height="20.00" fill="#fff" stroke="#000" stroke-width="1.7"/>
<rect x="965.80" y="857.20" width="20.2" height="20.00" fill="#fff" stroke="#000" stroke-width="1.7"/>
<rect x="965.80" y="903.20" width="20.2" height="20.00" fill="#fff" stroke="#000" stroke-width="1.7"/>
<rect x="965.80" y="995.20" width="20.2" height="20.00" fill="#fff" stroke="#000" stroke-width="1.7"/>
<rect x="965.80" y="1041.20" width="20.2" height="20.00" fill="#fff" stroke="#000" stroke-width="1.7"/>
<rect x="965.80" y="1087.20" width="20.2" height="20.00" fill="#fff" stroke="#000" stroke-width="1.7"/>
<rect x="965.80" y="1179.20" width="20.2" height="20.00" fill="#fff" stroke="#000" stroke-width="1.7"/>
<rect x="965.80" y="1225.20" width="20.2" height="20.00" fill="#fff" stroke="#000" stroke-width="1.7"/>
<rect x="965.80" y="1271.20" width="20.2" height="20.00" fill="#fff" stroke="#000" stroke-width="1.7"/>
<rect x="965.80" y="1317.20" width="20.2" height="20.00" fill="#fff" stroke="#000" stroke-width="1.7"/>
<rect x="965.80" y="1409.20" width="20.2" height="20.00" fill="#fff" stroke="#000" stroke-width="1.7"/>
<rect x="965.80" y="1455.20" width="20.2" height="20.00" fill="#fff" stroke="#000" stroke-width="1.7"/>
<rect x="965.80" y="1501.20" width="20.2" height="20.00" fill="#fff" stroke="#000" stroke-width="1.7"/>
<rect x="965.80" y="1547.20" width="20.2" height="20.00" fill="#fff" stroke="#000" stroke-width="1.7"/>
<rect x="965.80" y="1639.20" width="20.2" height="20.00" fill="#fff" stroke="#000" stroke-width="1.7"/>
<rect x="965.80" y="1685.20" width="20.2" height="20.00" fill="#fff" stroke="#000" stroke-width="1.7"/>
<rect x="965.80" y="1731.20" width="20.2" height="20.00" fill="#fff" stroke="#000" stroke-width="1.7"/>
<rect x="965" y="1776.40" width="22" height="2.40" fill="#000"/><rect x="966.7" y="1778.10" width="18.6" height="0.70" fill="#fff"/>
<path d="M901 844.2 L915 844.2 L915 858.4 L907.6 851.2 L901 851.2 Z" fill="#bd6bca" />
<path d="M901 890.2 L915 890.2 L915 904.4 L907.6 897.2 L901 897.2 Z" fill="#bd6bca" />
<path d="M901 1442.2 L915 1442.2 L915 1456.4 L907.6 1449.2 L901 1449.2 Z" fill="#bd6bca" />
<path d="M901 1672.2 L915 1672.2 L915 1686.4 L907.6 1679.2 L901 1679.2 Z" fill="#bd6bca" />
<rect x="1122.40" y="613.50" width="561.90" height="91.80" fill="#f0f0f0" />
<line x1="1684.30" y1="613.50" x2="1684.30" y2="705.30" stroke="#6e6e6e" stroke-width="1.3" />
<line x1="1122.40" y1="705.30" x2="1684.30" y2="705.30" stroke="#6e6e6e" stroke-width="1.3" />
<text x="1300.37" y="668.90" font-size="23.7" textLength="205.22" lengthAdjust="spacingAndGlyphs" fill="#000" >Write Info For PCs</text>
<rect x="1122.40" y="751.30" width="561.90" height="91.70" fill="#f0f0f0" />
<line x1="1684.30" y1="751.30" x2="1684.30" y2="843.00" stroke="#6e6e6e" stroke-width="1.3" />
<line x1="1122.40" y1="843.00" x2="1684.30" y2="843.00" stroke="#6e6e6e" stroke-width="1.3" />
<text x="1301.75" y="789.90" font-size="23.7" textLength="201.84" lengthAdjust="spacingAndGlyphs" fill="#000" >Copy Info for PC's</text>
<text x="1275.96" y="823.90" font-size="23.7" textLength="253.24" lengthAdjust="spacingAndGlyphs" fill="#000" >(Paste into workbook)</text>
<rect x="1122.40" y="1486.70" width="561.90" height="92.30" fill="#f0f0f0" />
<line x1="1684.30" y1="1486.70" x2="1684.30" y2="1579.00" stroke="#6e6e6e" stroke-width="1.3" />
<line x1="1122.40" y1="1579.00" x2="1684.30" y2="1579.00" stroke="#6e6e6e" stroke-width="1.3" />
<text x="1256.13" y="1543.00" font-size="23.7" textLength="291.93" lengthAdjust="spacingAndGlyphs" fill="#000" >Create Email to Customer</text>
<rect x="1122.40" y="889.40" width="561.90" height="46.00" fill="#5b9bd5" />
<rect x="1122.40" y="935.40" width="561.90" height="46.00" fill="#ededed" />
<text x="1126.00" y="921.40" font-size="23.7" textLength="131.62" lengthAdjust="spacingAndGlyphs" font-weight="bold" fill="#fff" >Department</text>
<text x="1126.71" y="974.00" font-size="23.7" textLength="104.03" lengthAdjust="spacingAndGlyphs" font-weight="bold" fill="#000" >Customer</text>
<rect x="1122.40" y="981.40" width="561.90" height="46.00" fill="#5b9bd5" />
<rect x="1122.40" y="1027.40" width="561.90" height="46.00" fill="#ededed" />
<text x="1126.08" y="1013.40" font-size="23.7" textLength="93.91" lengthAdjust="spacingAndGlyphs" font-weight="bold" fill="#fff" >Location</text>
<text x="1126.07" y="1066.00" font-size="23.7" textLength="93.10" lengthAdjust="spacingAndGlyphs" font-weight="bold" fill="#000" >Kelowna</text>
<rect x="1122.40" y="1073.40" width="561.90" height="46.00" fill="#5b9bd5" />
<rect x="1122.40" y="1119.40" width="561.90" height="46.00" fill="#ededed" />
<text x="1126.71" y="1105.40" font-size="23.7" textLength="167.13" lengthAdjust="spacingAndGlyphs" font-weight="bold" fill="#fff" >Connection Fee</text>
<text x="1126.72" y="1158.00" font-size="23.7" textLength="177.91" lengthAdjust="spacingAndGlyphs" font-weight="bold" fill="#000" >Connection Fees</text>
<line x1="1122.40" y1="889.40" x2="1684.30" y2="889.40" stroke="#000" stroke-width="1.15" />
<line x1="1122.40" y1="935.40" x2="1684.30" y2="935.40" stroke="#000" stroke-width="1.15" />
<line x1="1122.40" y1="981.40" x2="1684.30" y2="981.40" stroke="#000" stroke-width="1.15" />
<line x1="1122.40" y1="1027.40" x2="1684.30" y2="1027.40" stroke="#000" stroke-width="1.15" />
<line x1="1122.40" y1="1073.40" x2="1684.30" y2="1073.40" stroke="#000" stroke-width="1.15" />
<line x1="1122.40" y1="1119.40" x2="1684.30" y2="1119.40" stroke="#000" stroke-width="1.15" />
<line x1="1122.40" y1="1165.40" x2="1684.30" y2="1165.40" stroke="#000" stroke-width="1.15" />
<line x1="1122.40" y1="889.40" x2="1122.40" y2="1165.40" stroke="#000" stroke-width="1.15" />
<line x1="1684.30" y1="889.40" x2="1684.30" y2="1165.40" stroke="#000" stroke-width="1.15" />
<rect x="1122.40" y="1257.40" width="561.90" height="46.00" fill="#5b9bd5" />
<rect x="1122.40" y="1303.40" width="561.90" height="46.00" fill="#ededed" />
<text x="1126.65" y="1289.40" font-size="23.7" textLength="49.91" lengthAdjust="spacingAndGlyphs" font-weight="bold" fill="#fff" >OID:</text>
<text x="1126.84" y="1342.00" font-size="23.7" textLength="94.36" lengthAdjust="spacingAndGlyphs" font-weight="bold" fill="#000" >261XXXX</text>
<rect x="1122.40" y="1349.40" width="561.90" height="46.00" fill="#5b9bd5" />
<rect x="1122.40" y="1395.40" width="561.90" height="46.00" fill="#ededed" />
<text x="1126.71" y="1381.40" font-size="23.7" textLength="177.65" lengthAdjust="spacingAndGlyphs" font-weight="bold" fill="#fff" >Customer Email:</text>
<text x="1126.56" y="1434.00" font-size="23.7" textLength="236.31" lengthAdjust="spacingAndGlyphs" fill="#0563c1" >customer@email.com</text>
<line x1="1127.60" y1="1436.80" x2="1361.90" y2="1436.80" stroke="#0563c1" stroke-width="1.8" />
<line x1="1122.40" y1="1257.40" x2="1684.30" y2="1257.40" stroke="#000" stroke-width="1.15" />
<line x1="1122.40" y1="1303.40" x2="1684.30" y2="1303.40" stroke="#000" stroke-width="1.15" />
<line x1="1122.40" y1="1349.40" x2="1684.30" y2="1349.40" stroke="#000" stroke-width="1.15" />
<line x1="1122.40" y1="1395.40" x2="1684.30" y2="1395.40" stroke="#000" stroke-width="1.15" />
<line x1="1122.40" y1="1441.40" x2="1684.30" y2="1441.40" stroke="#000" stroke-width="1.15" />
<line x1="1122.40" y1="1257.40" x2="1122.40" y2="1441.40" stroke="#000" stroke-width="1.15" />
<line x1="1684.30" y1="1257.40" x2="1684.30" y2="1441.40" stroke="#000" stroke-width="1.15" />
<rect x="1760.50" y="613.40" width="834.90" height="46.00" fill="#e7e6e6" />
<rect x="1760.50" y="659.40" width="834.90" height="920.00" fill="#fffecc" />
<rect x="1760.50" y="613.40" width="834.90" height="966.00" fill="none" stroke="#000" stroke-width="1.15"/>
<line x1="1760.50" y1="659.40" x2="2595.40" y2="659.40" stroke="#000" stroke-width="1.15" />
<text x="2072.49" y="650.70" font-size="40" textLength="211.07" lengthAdjust="spacingAndGlyphs" font-weight="bold" fill="#5b9bd5" >Info for PCs</text>
<rect x="2643.40" y="613.40" width="477.10" height="46.00" fill="#e7e6e6" />
<rect x="2643.40" y="659.40" width="477.10" height="138.00" fill="#fffecc" />
<rect x="2643.40" y="613.40" width="477.10" height="184.00" fill="none" stroke="#000" stroke-width="1.15"/>
<line x1="2643.40" y1="659.40" x2="3120.50" y2="659.40" stroke="#000" stroke-width="1.15" />
<text x="2666.27" y="650.40" font-size="39" textLength="356.08" lengthAdjust="spacingAndGlyphs" font-weight="bold" fill="#5b9bd5" >Project Description:</text>
<text x="2646.26" y="680.60" font-size="19.6" textLength="419.95" lengthAdjust="spacingAndGlyphs" fill="#000" >Customer is requesting a XXA, OH/UG, XPH,</text>
<text x="2646.82" y="707.90" font-size="19.6" textLength="374.59" lengthAdjust="spacingAndGlyphs" fill="#000" >XXX/XXXV, residential service upgrade.</text>
<rect x="2643.40" y="843.40" width="477.10" height="368.00" fill="#ffffff" />
<rect x="2643.40" y="843.40" width="477.10" height="368.00" fill="none" stroke="#000" stroke-width="1.15"/>
<text x="2646.63" y="869.80" font-size="23.7" textLength="72.64" lengthAdjust="spacingAndGlyphs" fill="#000" >Notes:</text>
<line x1="2648.70" y1="874.00" x2="2723.30" y2="874.00" stroke="#000" stroke-width="1.8" />
<text x="2648.16" y="903.40" font-size="23.7" textLength="410.31" lengthAdjust="spacingAndGlyphs" fill="#000" >The info for PC's may be edited before</text>
<text x="2647.67" y="937.60" font-size="23.7" textLength="386.66" lengthAdjust="spacingAndGlyphs" fill="#000" >copying. You may want to rearrange</text>
<text x="2647.64" y="971.70" font-size="23.7" textLength="382.17" lengthAdjust="spacingAndGlyphs" fill="#000" >connection information or combine</text>
<text x="2648.02" y="1005.90" font-size="23.7" textLength="269.43" lengthAdjust="spacingAndGlyphs" fill="#000" >statements into one line.</text>
<text x="2646.70" y="1073.70" font-size="23.7" textLength="67.41" lengthAdjust="spacingAndGlyphs" fill="#000" >Email:</text>
<line x1="2648.70" y1="1077.90" x2="2713.00" y2="1077.90" stroke="#000" stroke-width="1.8" />
<text x="2647.60" y="1107.60" font-size="23.7" textLength="253.44" lengthAdjust="spacingAndGlyphs" fill="#000" >- Attach design to email</text>
<text x="2647.57" y="1141.80" font-size="23.7" textLength="434.65" lengthAdjust="spacingAndGlyphs" fill="#000" >- Attach meter list to email for multi-unit</text>
<text x="2647.10" y="1175.40" font-size="23.7" textLength="205.57" lengthAdjust="spacingAndGlyphs" fill="#000" >residential projects</text>
<rect x="2643.40" y="1257.40" width="477.10" height="46.00" fill="#e7e6e6" />
<rect x="2643.40" y="1303.40" width="477.10" height="138.00" fill="#fffecc" />
<rect x="2643.40" y="1257.40" width="477.10" height="184.00" fill="none" stroke="#000" stroke-width="1.15"/>
<line x1="2643.40" y1="1303.40" x2="3120.50" y2="1303.40" stroke="#000" stroke-width="1.15" />
<text x="2666.17" y="1293.60" font-size="39" textLength="277.33" lengthAdjust="spacingAndGlyphs" font-weight="bold" fill="#5b9bd5" >Email Greeting:</text>
<text x="2645.85" y="1324.90" font-size="19.6" textLength="54.24" lengthAdjust="spacingAndGlyphs" fill="#000" >Hello,</text>
<text x="2645.85" y="1379.00" font-size="19.6" textLength="397.59" lengthAdjust="spacingAndGlyphs" fill="#000" >Now that your FortisBC electrical design is</text>
<text x="2646.70" y="1405.60" font-size="19.6" textLength="451.52" lengthAdjust="spacingAndGlyphs" fill="#000" >approved, below is a list of action items required</text>
<text x="2647.28" y="1432.40" font-size="19.6" textLength="225.63" lengthAdjust="spacingAndGlyphs" fill="#000" >to energize your project.</text>
<rect x="2643.40" y="1476.20" width="477.10" height="102.90" fill="#f0f0f0" />
<line x1="3120.50" y1="1476.20" x2="3120.50" y2="1579.10" stroke="#6e6e6e" stroke-width="1.3" />
<line x1="2643.40" y1="1579.10" x2="3120.50" y2="1579.10" stroke="#6e6e6e" stroke-width="1.3" />
<text x="2817.82" y="1537.00" font-size="23.7" textLength="125.52" lengthAdjust="spacingAndGlyphs" fill="#000" >Reset Page</text>
<rect x="0.00" y="1778.80" width="3184.00" height="70.20" fill="url(#appbg)" />
<line x1="0.00" y1="1779.30" x2="3184.00" y2="1779.30" stroke="#dcdcdc" stroke-width="1" />
<path d="M62 1805 L48.5 1817 L62 1829" fill="none" stroke="#8a8a8a" stroke-width="2.4" />
<path d="M130 1805 L143.5 1817 L130 1829" fill="none" stroke="#8a8a8a" stroke-width="2.4" />
<path d="M266 1849 L266 1801 Q266 1789 278 1789 L417 1789 Q429 1789 429 1801 L429 1849 Z" fill="#e1efd9"/>
<text x="285.98" y="1833.00" font-size="32" textLength="121.24" lengthAdjust="spacingAndGlyphs" fill="#1a1a1a" >How To</text>
<line x1="439.70" y1="1796.50" x2="439.70" y2="1841.00" stroke="#c8c8c8" stroke-width="1.5" />
<path d="M443.8 1779 Q452.4 1779 452.4 1788 L452.4 1836 Q452.4 1846.3 462 1846.3 L598 1846.3 Q608 1846.3 608 1836 L608 1788 Q608 1779 617.5 1779 Z" fill="#ffffff"/>
<path d="M452.4 1791 Q452.4 1781 462.4 1781 L598 1781 Q608 1781 608 1791 L608 1837 Q608 1846.3 598 1846.3 L462 1846.3 Q452.4 1846.3 452.4 1837 Z" fill="url(#tabg)"/>
<text x="469.40" y="1825.00" font-size="33" textLength="121.00" lengthAdjust="spacingAndGlyphs" fill="#1a1a1a" stroke="#1a1a1a" stroke-width="1.1">Info for</text>
<rect x="471.40" y="1836.80" width="118.40" height="4.80" fill="#107c41" />
<line x1="620.60" y1="1796.50" x2="620.60" y2="1841.00" stroke="#c8c8c8" stroke-width="1.5" />
<path d="M741 1803.5 L741 1831.4 M727 1817.5 L755 1817.5" fill="none" stroke="#333" stroke-width="2.6" />
<rect x="2311.70" y="1807.00" width="5.40" height="5.40" fill="#333" />
<rect x="2311.70" y="1816.50" width="5.40" height="5.40" fill="#333" />
<rect x="2311.70" y="1826.50" width="5.40" height="5.40" fill="#333" />
<path d="M2377 1797.1 L3184 1797.1 L3184 1840 L2377 1840 A21.45 21.45 0 0 1 2377 1797.1 Z" fill="#f6f6f6"/>
<path d="M2368 1818.5 L2384.7 1807.6 L2384.7 1829.5 Z" fill="#707070" />
<rect x="2398" y="1808" width="900" height="21.1" rx="10.5" fill="#707070"/>
</svg></body></html>
